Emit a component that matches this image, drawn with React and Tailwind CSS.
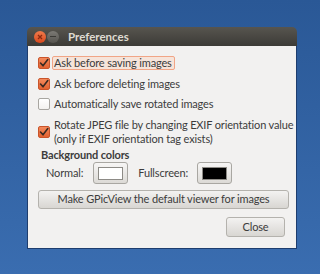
import React from "react";

const font = { fontFamily: "Lato, 'Liberation Sans', sans-serif" };

function Check({ checked }) {
  if (!checked) {
    return (
      <div className="w-[12px] h-[12px] rounded-[2px] border border-[#a8a6a1] bg-gradient-to-b from-[#ffffff] to-[#f3f2f0] shrink-0" />
    );
  }
  return (
    <div className="w-[12px] h-[12px] rounded-[2px] border border-[#c9542a] bg-gradient-to-b from-[#f48a5c] to-[#e2612f] shrink-0 flex items-center justify-center">
      <svg width="10" height="10" viewBox="0 0 10 10">
        <path d="M1.5 5 L4 7.8 L8.8 1.6" fill="none" stroke="#3a2a22" strokeWidth="1.6" strokeLinecap="round" strokeLinejoin="round" />
      </svg>
    </div>
  );
}

function Row({ checked, focus, children, className = "" }) {
  return (
    <div className={"flex items-center gap-[2px] " + className}>
      <Check checked={checked} />
      <div
        className={
          "pl-[1px] pr-[1px] h-[14px] flex items-center leading-[14px] whitespace-nowrap " +
          (focus ? "border border-[#f1a586] bg-[#f6e4da] rounded-[2px] pr-[2px]" : "border border-transparent")
        }
      >
        {children}
      </div>
    </div>
  );
}

function ColorBtn({ color }) {
  return (
    <div className="w-[35px] h-[22px] rounded-[3px] border border-[#a9a7a2] bg-gradient-to-b from-[#f7f6f5] to-[#dcdad6] flex items-center justify-center">
      <div className="w-[25px] h-[13px] border border-[#8d8b86]" style={{ background: color }} />
    </div>
  );
}

export default function App() {
  return (
    <div
      className="w-[320px] h-[274px] bg-gradient-to-b from-[#2a5896] to-[#3a6db0] pt-[27px] pl-[27px] overflow-hidden text-[11px] tracking-[-0.15px] text-[#3c3c3c]"
      style={font}
    >
      <div className="w-[270px] flex flex-col">
        <div className="h-[19px] rounded-t-[5px] bg-gradient-to-b from-[#57554f] to-[#3c3b37] flex items-center pl-[7px]">
          <div className="w-[12px] h-[12px] rounded-full bg-gradient-to-b from-[#f07a4a] to-[#d9481c] flex items-center justify-center">
            <svg width="6" height="6" viewBox="0 0 6 6">
              <path d="M1 1 L5 5 M5 1 L1 5" stroke="#8a2a10" strokeWidth="1.3" />
            </svg>
          </div>
          <div className="w-[12px] h-[12px] rounded-full bg-gradient-to-b from-[#7c7a75] to-[#56544f] ml-[1px] flex items-center justify-center">
            <div className="w-[6px] h-[1.5px] bg-[#3b3a36]" />
          </div>
          <div className="ml-[9px] text-[11.5px] font-bold text-[#dfdbd2] leading-none tracking-normal">Preferences</div>
        </div>
        <div className="bg-[#f2f1f0] border-x border-b border-[#1e3d6e] h-[203px] pl-[10px] pt-[10px] flex flex-col">
          <Row checked focus>Ask before saving images</Row>
          <Row checked className="mt-[7px]">Ask before deleting images</Row>
          <Row className="mt-[6px]">Automatically save rotated images</Row>
          <div className="flex items-center gap-[3px] mt-[7px]">
            <Check checked />
            <div className="leading-[14px] pl-[1px] whitespace-nowrap">
              <div>Rotate JPEG file by changing EXIF orientation value</div>
              <div>(only if EXIF orientation tag exists)</div>
            </div>
          </div>
          <div className="font-bold leading-[14px] mt-[2px] pl-[3px]">Background colors</div>
          <div className="flex items-center h-[22px] pl-[8px]">
            <span>Normal:</span>
            <div className="ml-[10px]"><ColorBtn color="#ffffff" /></div>
            <span className="ml-[10px]">Fullscreen:</span>
            <div className="ml-[9px]"><ColorBtn color="#000000" /></div>
          </div>
          <div className="mt-[6px] w-[251px] h-[19px] rounded-[3px] border border-[#b4b2ad] bg-gradient-to-b from-[#f3f2f1] to-[#d8d6d2] flex items-center justify-center whitespace-nowrap">
            Make GPicView the default viewer for images
          </div>
          <div className="mt-[8px] flex justify-end pr-[11px]">
            <div className="w-[59px] h-[20px] rounded-[3px] border border-[#b4b2ad] bg-gradient-to-b from-[#f3f2f1] to-[#d8d6d2] flex items-center justify-center">
              Close
            </div>
          </div>
        </div>
      </div>
    </div>
  );
}
